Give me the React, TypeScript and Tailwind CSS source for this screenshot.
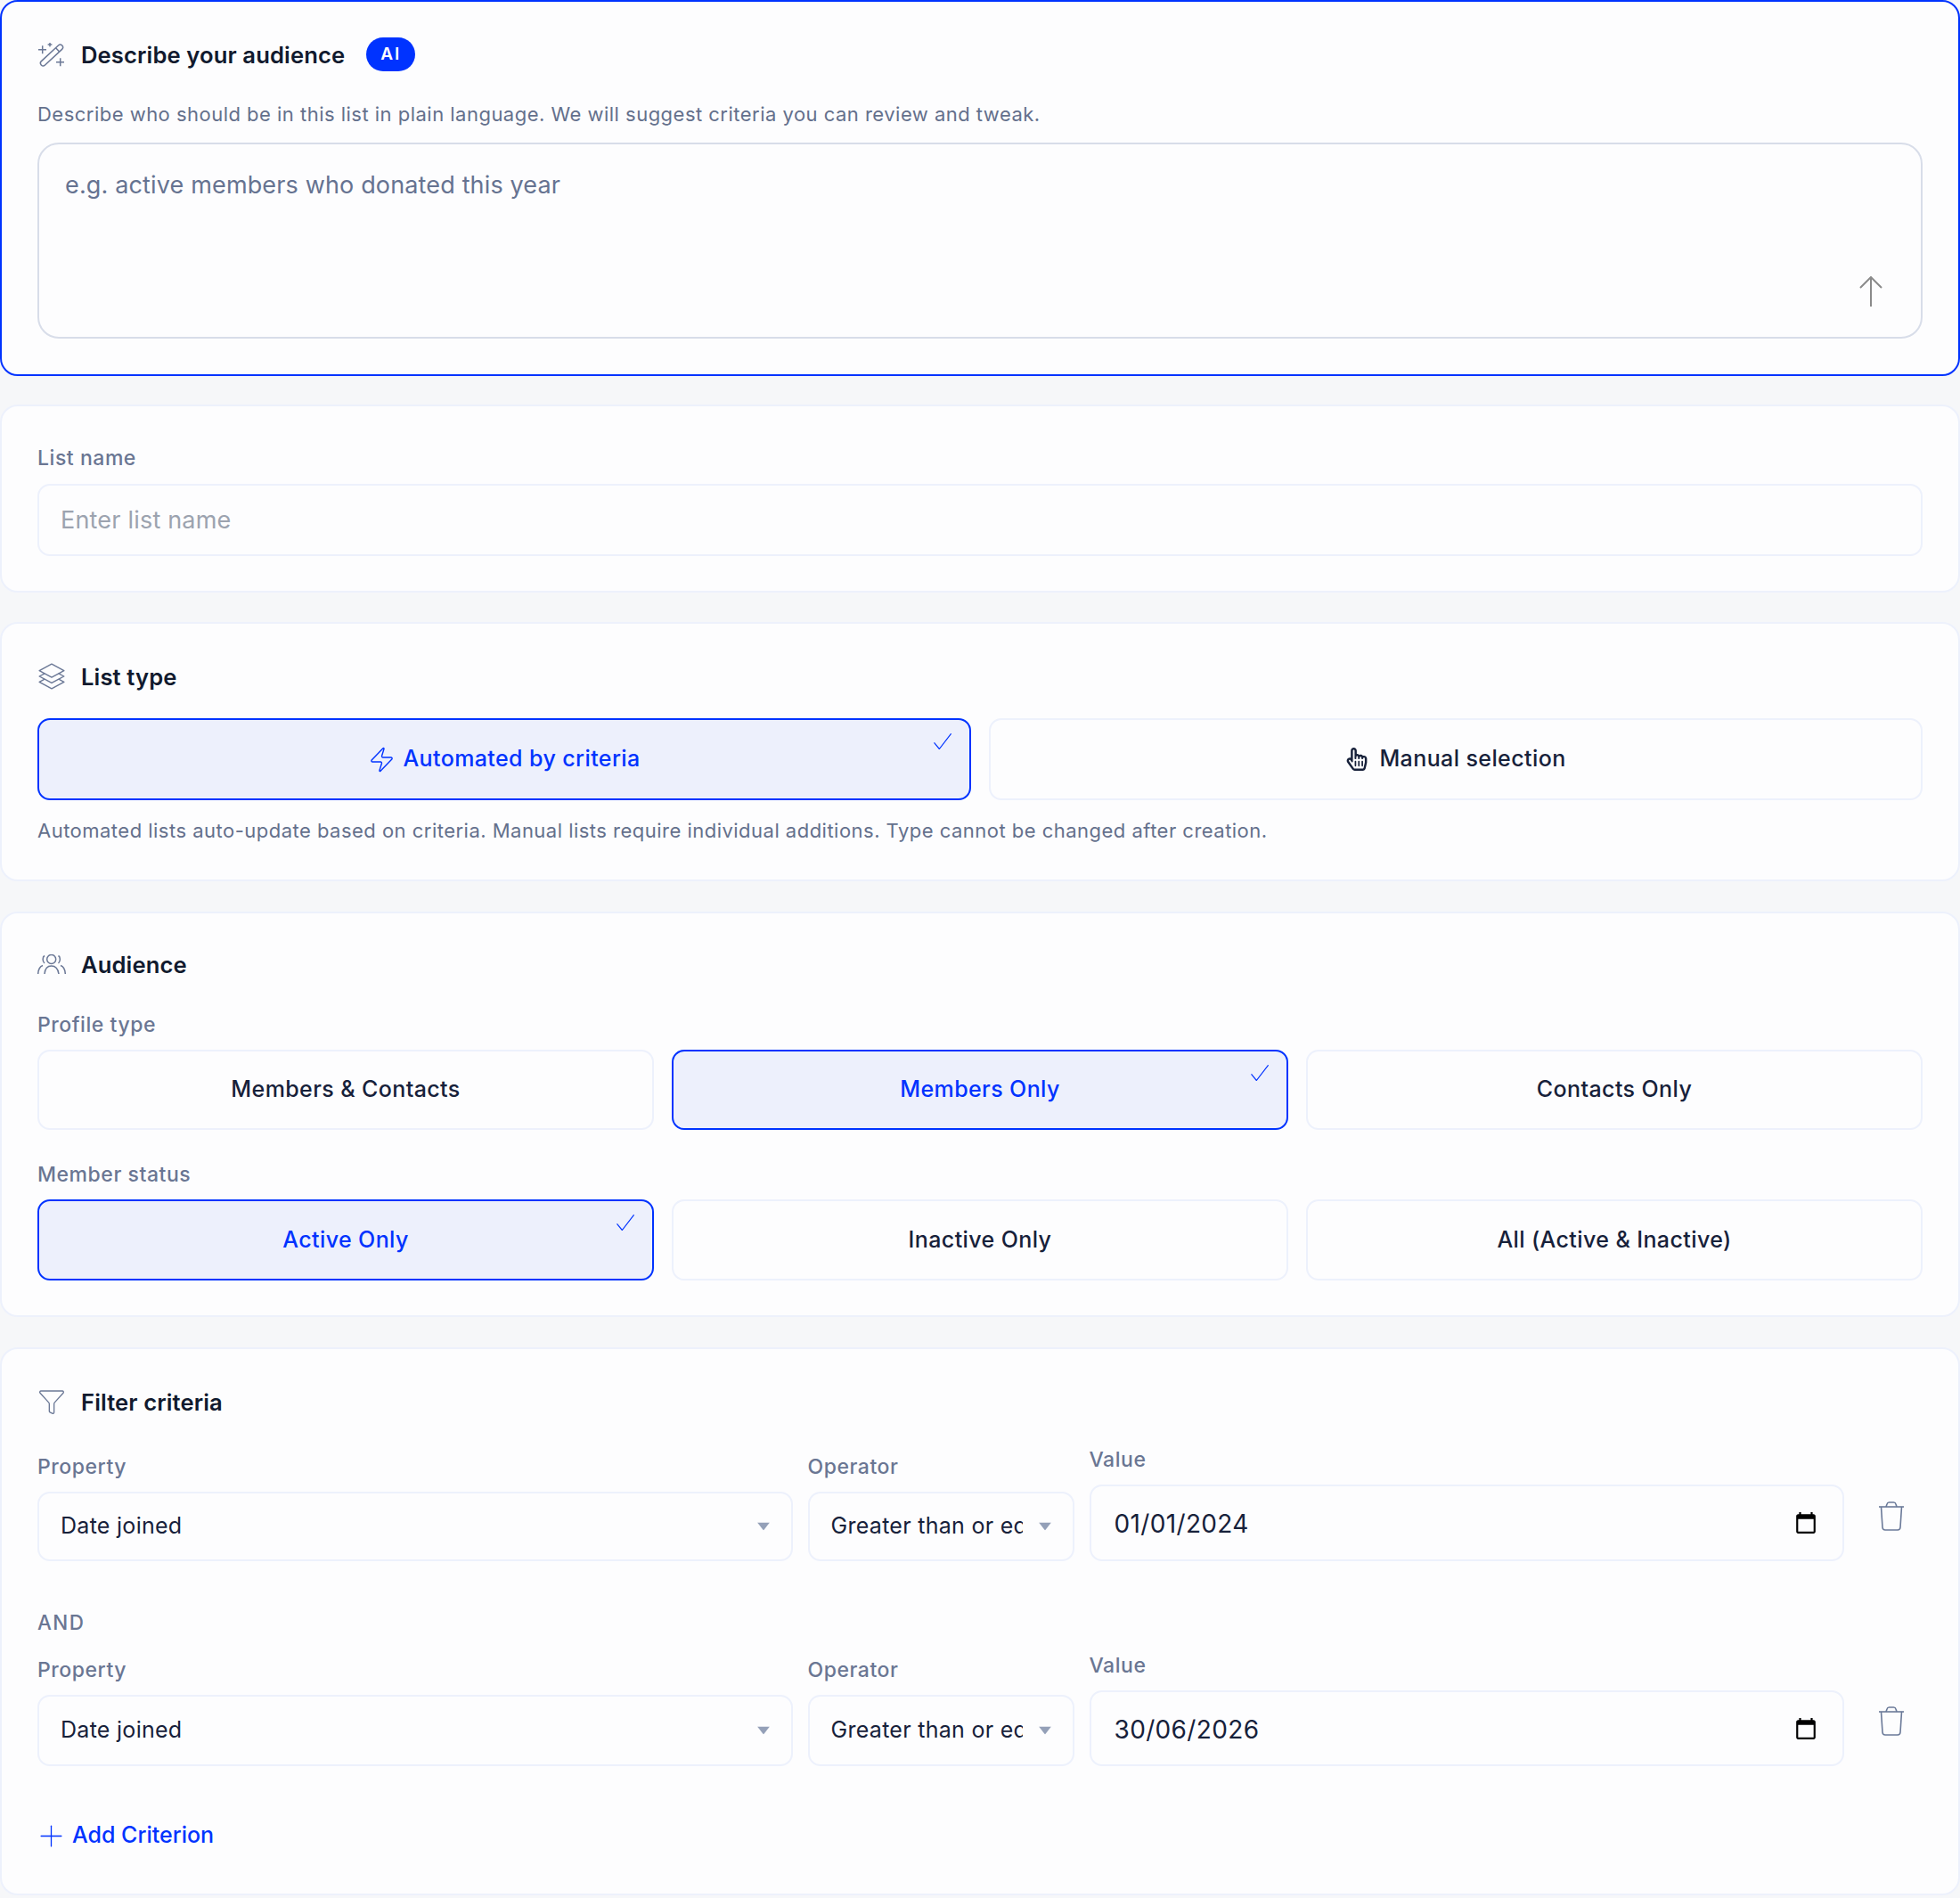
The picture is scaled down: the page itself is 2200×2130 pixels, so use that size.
import { Filter, Plus, Zap } from 'lucide-react'
import { ReactNode } from 'react'
import { FaRegHandPointer } from 'react-icons/fa'
import { HiOutlineSquare3Stack3D } from 'react-icons/hi2'

const labelClass = 'h-[28px] pt-[1px] text-[23px] font-medium leading-[28px] tracking-[0.550px] text-[#6a7693]'
const helpClass = 'text-[22px] leading-[28px] tracking-[0.480px] text-[#64708c]'

function Card({ className, children }: { className: string; children: ReactNode }) {
  return <section className={`rounded-[20px] border-2 bg-[#fdfdfe] px-[40px] ${className}`}>{children}</section>
}

function CardTitle({ icon, title }: { icon: ReactNode; title: string }) {
  return (
    <div className="flex h-[30px] items-center">
      <span className="flex w-[49px] shrink-0 items-center text-[#6b7896]">{icon}</span>
      <h2 className="mt-[2px] text-[25.6px] font-semibold leading-[30px] tracking-[0.120px] text-[#111a2e]">{title}</h2>
    </div>
  )
}

function Choice({ selected, height, children }: { selected?: boolean; height: string; children: ReactNode }) {
  return (
    <button
      className={`relative flex flex-1 items-center justify-center gap-[12px] rounded-[14px] border-2 text-[25px] font-medium tracking-[0.400px] ${height} ${
        selected ? 'border-[#0033ff] bg-[#edf0fc] text-[#0033ff]' : 'border-[#edf1fc] bg-[#fdfdfe] text-[#17213a]'
      }`}
    >
      {children}
      {selected && (
        <svg viewBox="0 0 20 18" fill="none" stroke="currentColor" strokeWidth="1.2" className="absolute right-[20px] top-[15px] h-[18px] w-[20px]">
          <path d="M0.500 10.300L6.300 17.500L19.600 0.300" />
        </svg>
      )}
    </button>
  )
}

function SelectField({
  label,
  value,
  height,
  className,
  paddingRight,
}: {
  label: string
  value: string
  height: string
  className: string
  paddingRight: string
}) {
  return (
    <div className={className}>
      <div className={labelClass}>{label}</div>
      <div className="relative mt-[15px]">
        <select
          defaultValue={value}
          className={`block w-full appearance-none rounded-[14px] border-2 border-[#edf1fc] bg-[#fdfdfe] pl-[24px] text-[25px] tracking-[0.280px] text-[#17213a] outline-none ${height} ${paddingRight}`}
        >
          <option>{value}</option>
        </select>
        <svg viewBox="0 0 14 9" className="absolute right-[26px] top-1/2 h-[9px] w-[14px] -translate-y-1/2 fill-[#94a0b8]">
          <path d="M0 0h14L7 9z" />
        </svg>
      </div>
    </div>
  )
}

function DateField({ value, height }: { value: string; height: string }) {
  return (
    <div className="flex-1">
      <div className={labelClass}>Value</div>
      <div
        className={`mt-[15px] flex items-center justify-between rounded-[14px] border-2 border-[#edf1fc] bg-[#fdfdfe] pl-[26px] pr-[28px] text-[28px] tracking-[0.350px] text-[#17213a] ${height}`}
      >
        <span className="pt-[2px]">{value}</span>
        <svg viewBox="0 0 24 24" className="h-[26px] w-[26px] fill-black">
          <path d="M20 3h-1V1h-2v2H7V1H5v2H4c-1.1 0-2 .9-2 2v16c0 1.1.9 2 2 2h16c1.1 0 2-.9 2-2V5c0-1.1-.9-2-2-2zm0 18H4V8h16v13z" />
        </svg>
      </div>
    </div>
  )
}

function TrashButton() {
  return (
    <button className="mb-[34px] w-[71px] shrink-0 pl-[22px] text-[#6b7a99]">
      <svg viewBox="0 0 28 33" fill="none" stroke="currentColor" strokeWidth="1.6" className="h-[33px] w-[28px]">
        <path d="M0 6h28" />
        <path d="M8 6l1-3q.5-2 2.500-2h5q2 0 2.500 2l1 3" />
        <path d="M2.500 6l1.500 23q.3 3 3 3h14q2.700 0 3-3l1.500-23" />
      </svg>
    </button>
  )
}

function CriterionRow({ className, valueHeight, selectHeight, date }: { className: string; valueHeight: string; selectHeight: string; date: string }) {
  return (
    <div className={`flex items-end gap-[17px] ${className}`}>
      <SelectField label="Property" value="Date joined" height={selectHeight} className="flex-1" paddingRight="pr-[48px]" />
      <SelectField
        label="Operator"
        value="Greater than or equal"
        height={selectHeight}
        className="w-[299px] shrink-0"
        paddingRight="pr-[56px]"
      />
      <DateField value={date} height={valueHeight} />
      <TrashButton />
    </div>
  )
}

function AudienceIcon() {
  return (
    <svg viewBox="0 0 32 22" fill="none" stroke="currentColor" strokeWidth="1.500" className="h-[22px] w-[32px]">
      <circle cx="15.700" cy="5.500" r="5" />
      <path d="M8 1.500C5.500 3 5.500 8 8 10" />
      <path d="M23.500 1.500C26 3 26 8 23.500 10" />
      <path d="M8 22C8.500 15.500 12 13 15.700 13S23 15.500 24 22" />
      <path d="M0.700 22C1 17 3 13.500 6 12.500" />
      <path d="M31.300 22C31 17 29 13.500 26 12.500" />
    </svg>
  )
}

function WandIcon() {
  return (
    <svg viewBox="0 0 30 27" fill="none" stroke="currentColor" strokeWidth="1.500" className="h-[27px] w-[30px]">
      <g transform="translate(16 14) rotate(47)">
        <rect x="-3" y="-16" width="6" height="32" rx="3" />
        <path d="M-3 -9h6" />
      </g>
      <path d="M1 7.700h9M5.700 3.200v9" />
      <path d="M14 -0.500l.8 1.700 1.700.8-1.700.8-.8 1.700-.8-1.700-1.700-.8 1.700-.8z" fill="currentColor" strokeWidth="0.500" />
      <path d="M21 21.700h9M25.700 17.200v9" />
    </svg>
  )
}

export default function App() {
  return (
    <div className="min-h-screen bg-[#f6f7f9] font-['Inter',sans-serif]">
      <Card className="mb-[32px] h-[422px] border-[#0033ff] pt-[40px]">
        <div className="flex h-[38px] items-center">
          <span className="flex w-[49px] shrink-0 items-center text-[#6b7896]">
            <WandIcon />
          </span>
          <h2 className="mt-[2px] text-[25.6px] font-semibold tracking-[0.120px] text-[#111a2e]">Describe your audience</h2>
          <span className="ml-[24px] flex h-[38px] w-[55px] items-center justify-center rounded-full bg-[#0033ff] text-[19px] font-semibold tracking-[2px] text-white">
            AI
          </span>
        </div>
        <p className={`mt-[34px] ${helpClass}`}>
          Describe who should be in this list in plain language. We will suggest criteria you can review and tweak.
        </p>
        <div className="relative mt-[18px]">
          <textarea
            placeholder="e.g. active members who donated this year"
            className="block h-[220px] w-full resize-none rounded-[24px] border-2 border-[#d8dde9] bg-transparent px-[29px] py-[28px] text-[27px] leading-[36px] tracking-[0.150px] outline-none placeholder:text-[#667391]"
          />
          <svg viewBox="0 0 26 34" fill="none" stroke="#8a8a8a" strokeWidth="2" className="absolute bottom-[36px] right-[45px] h-[34px] w-[26px]">
            <path d="M13 34V1M1 13L13 1L25 13" />
          </svg>
        </div>
      </Card>

      <Card className="mb-[33px] h-[211px] border-[#edf1fc] pt-[43px]">
        <div className={labelClass}>List name</div>
        <input
          placeholder="Enter list name"
          className="mt-[16px] block h-[81px] w-full rounded-[14px] border-2 border-[#edf1fc] bg-transparent px-[24px] text-[27px] tracking-[0.200px] outline-none placeholder:text-[#9ca3af]"
        />
      </Card>

      <Card className="mb-[34px] h-[291px] border-[#edf1fc] pt-[44px]">
        <CardTitle icon={<HiOutlineSquare3Stack3D size={34} strokeWidth={1} className="-ml-[1px]" />} title="List type" />
        <div className="mt-[32px] flex gap-[20px]">
          <Choice selected height="h-[92px]">
            <Zap size={31} strokeWidth={1.100} className="-mr-[4px]" />
            Automated by criteria
          </Choice>
          <Choice height="h-[92px]">
            <FaRegHandPointer size={26} />
            Manual selection
          </Choice>
        </div>
        <p className={`mt-[20px] ${helpClass}`}>
          Automated lists auto-update based on criteria. Manual lists require individual additions. Type cannot be changed after creation.
        </p>
      </Card>

      <Card className="mb-[34px] h-[455px] border-[#edf1fc] pt-[42px]">
        <CardTitle icon={<AudienceIcon />} title="Audience" />
        <div className={`mt-[38px] ${labelClass}`}>Profile type</div>
        <div className="mt-[15px] flex gap-[20px]">
          <Choice height="h-[90px]">Members &amp; Contacts</Choice>
          <Choice selected height="h-[90px]">Members Only</Choice>
          <Choice height="h-[90px]">Contacts Only</Choice>
        </div>
        <div className={`mt-[35px] ${labelClass}`}>Member status</div>
        <div className="mt-[15px] flex gap-[20px]">
          <Choice selected height="h-[91px]">Active Only</Choice>
          <Choice height="h-[91px]">Inactive Only</Choice>
          <Choice height="h-[91px]">All (Active &amp; Inactive)</Choice>
        </div>
      </Card>

      <Card className="h-[615px] border-[#edf1fc] pt-[44px]">
        <CardTitle icon={<Filter size={32} strokeWidth={1} />} title="Filter criteria" />
        <CriterionRow className="mt-[35px]" selectHeight="h-[78px]" valueHeight="h-[86px]" date="01/01/2024" />
        <div className="mt-[54px] h-[28px] pt-[1px] text-[22.4px] font-medium leading-[28px] tracking-[1.500px] text-[#6a7693]">AND</div>
        <CriterionRow className="mt-[20px]" selectHeight="h-[80px]" valueHeight="h-[85px]" date="30/06/2026" />
        <button className="mt-[63px] flex h-[30px] items-center gap-[4px] text-[25px] font-medium text-[#0033ff]">
          <Plus size={39} strokeWidth={0.800} className="-ml-[4px]" />
          Add Criterion
        </button>
      </Card>
    </div>
  )
}
